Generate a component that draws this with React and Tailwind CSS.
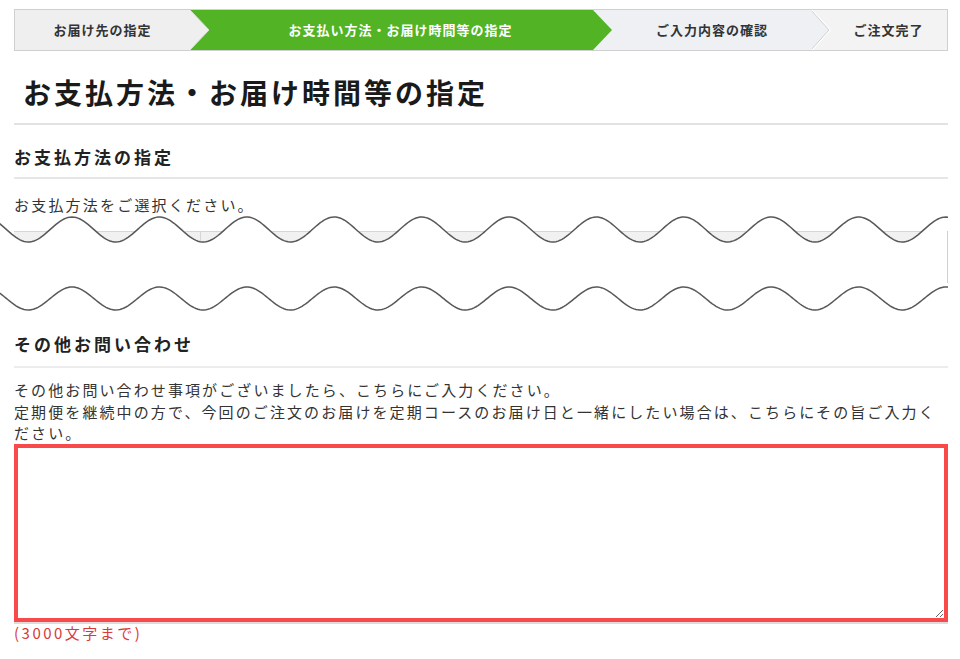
import React from 'react'

const steps = [
  { label: 'お届け先の指定', w: 'w-[175px]', pad: '', bg: 'bg-[#efefef]', text: 'text-[#333]', arrow: '#efefef' },
  { label: 'お支払い方法・お届け時間等の指定', w: 'w-[403px]', pad: 'pl-[18px]', bg: 'bg-[#52b325]', text: 'text-white', arrow: '#52b325' },
  { label: 'ご入力内容の確認', w: 'w-[219px]', pad: 'pl-[19px]', bg: 'bg-[#eef0f3]', text: 'text-[#333]', arrow: '#eef0f3', line: true },
  { label: 'ご注文完了', w: 'flex-1', pad: 'pl-[18px]', bg: 'bg-[#f3f3f3]', text: 'text-[#333]' },
]

// wavy "cut" marks drawn across the skipped part of the page
const wave = (c, a) => {
  const pts = []
  for (let x = -4; x <= 948; x += 2) {
    const y = c - a * Math.cos((2 * Math.PI * (x - 72)) / 87.4)
    pts.push(`${x},${y.toFixed(2)}`)
  }
  return pts
}

const StepBar = () => (
  <div className="mt-[9px] flex h-[42px] border border-[#d0d0d0]">
    {steps.map((s, i) => (
      <div
        key={i}
        className={`relative flex h-full items-center justify-center ${s.w} ${s.pad} ${s.bg}`}
      >
        <span className={`text-[13px] font-bold tracking-[1px] ${s.text}`}>{s.label}</span>
        {s.arrow && (
          <svg
            className="absolute left-full top-0 z-10"
            width="19"
            height="40"
            viewBox="0 0 19 40"
          >
            <polygon points="0,0 19,20 0,40" fill={s.arrow} />
            {s.line ? (
              <>
                <polyline points="0,0 18,20 0,40" fill="none" stroke="#ffffff" strokeWidth="1.5" />
                <polyline points="-1,0 17,20 -1,40" fill="none" stroke="#cfcfcf" strokeWidth="1" />
              </>
            ) : (
              i === 0 && <polyline points="0,0 19,20 0,40" fill="none" stroke="#dcdcdc" strokeWidth="1" />
            )}
          </svg>
        )}
      </div>
    ))}
  </div>
)

const CutMarks = () => {
  const top = wave(14.5, 12.5)
  const bottom = wave(83.5, 11.5)
  const above = `-4,-10 ${top.join(' ')} 948,-10`
  return (
    <svg className="block" width="960" height="100" viewBox="0 0 960 100">
      <defs>
        <clipPath id="aboveCut">
          <polygon points={above} />
        </clipPath>
      </defs>
      <g clipPath="url(#aboveCut)">
        <rect x="14" y="16" width="934" height="14" fill="#f1f1f1" />
        <line x1="14" y1="16.5" x2="948" y2="16.5" stroke="#d6d6d6" />
        <line x1="200.5" y1="16" x2="200.5" y2="30" stroke="#d6d6d6" />
      </g>
      <line x1="947.5" y1="16" x2="947.5" y2="68" stroke="#cfcfcf" />
      <polyline points={top.join(' ')} fill="none" stroke="#585858" strokeWidth="1.5" />
      <polyline points={bottom.join(' ')} fill="none" stroke="#585858" strokeWidth="1.5" />
    </svg>
  )
}

export default function App() {
  return (
    <div className="w-[960px] h-[659px] overflow-hidden bg-white text-[#333] font-['Noto_Sans_CJK_JP','Noto_Sans',sans-serif]">
      <div className="ml-[14px] w-[934px]">
        <StepBar />

        <div className="border-b-2 border-[#e2e2e2] pt-[20px] pb-[10px] pl-[9px]">
          <h1 className="text-[28px] font-bold leading-[42px] tracking-[3px] text-[#1a1a1a]">
            お支払方法・お届け時間等の指定
          </h1>
        </div>

        <h2 className="border-b-2 border-[#e6e6e6] pt-[20px] pb-[8px] text-[17px] font-bold leading-[24px] tracking-[3px] text-[#222]">
          お支払方法の指定
        </h2>
        <p className="pt-[15px] text-[15px] leading-[21px] tracking-[2.2px]">
          お支払方法をご選択ください。
        </p>
      </div>

      <CutMarks />

      <div className="ml-[14px] w-[934px]">
        <h2 className="border-b-2 border-[#ececec] pt-[17px] pb-[10px] text-[17px] font-bold leading-[24px] tracking-[3px] text-[#222]">
          その他お問い合わせ
        </h2>
        <p className="pt-[11px] text-[15px] leading-[21.5px] tracking-[2.1px]">
          その他お問い合わせ事項がございましたら、こちらにご入力ください。
          <br />
          定期便を継続中の方で、今回のご注文のお届けを定期コースのお届け日と一緒にしたい場合は、こちらにその旨ご入力く
          <br />
          ださい。
        </p>
        <textarea className="block h-[178px] w-full border-4 border-[#f84a4a] bg-white shadow-[0_2px_0_#dcdcdc] outline-none" />
        <p className="mt-[1px] text-[15px] leading-[20px] tracking-[2.5px] text-[#d83a3a]">(3000文字まで)</p>
      </div>
    </div>
  )
}
